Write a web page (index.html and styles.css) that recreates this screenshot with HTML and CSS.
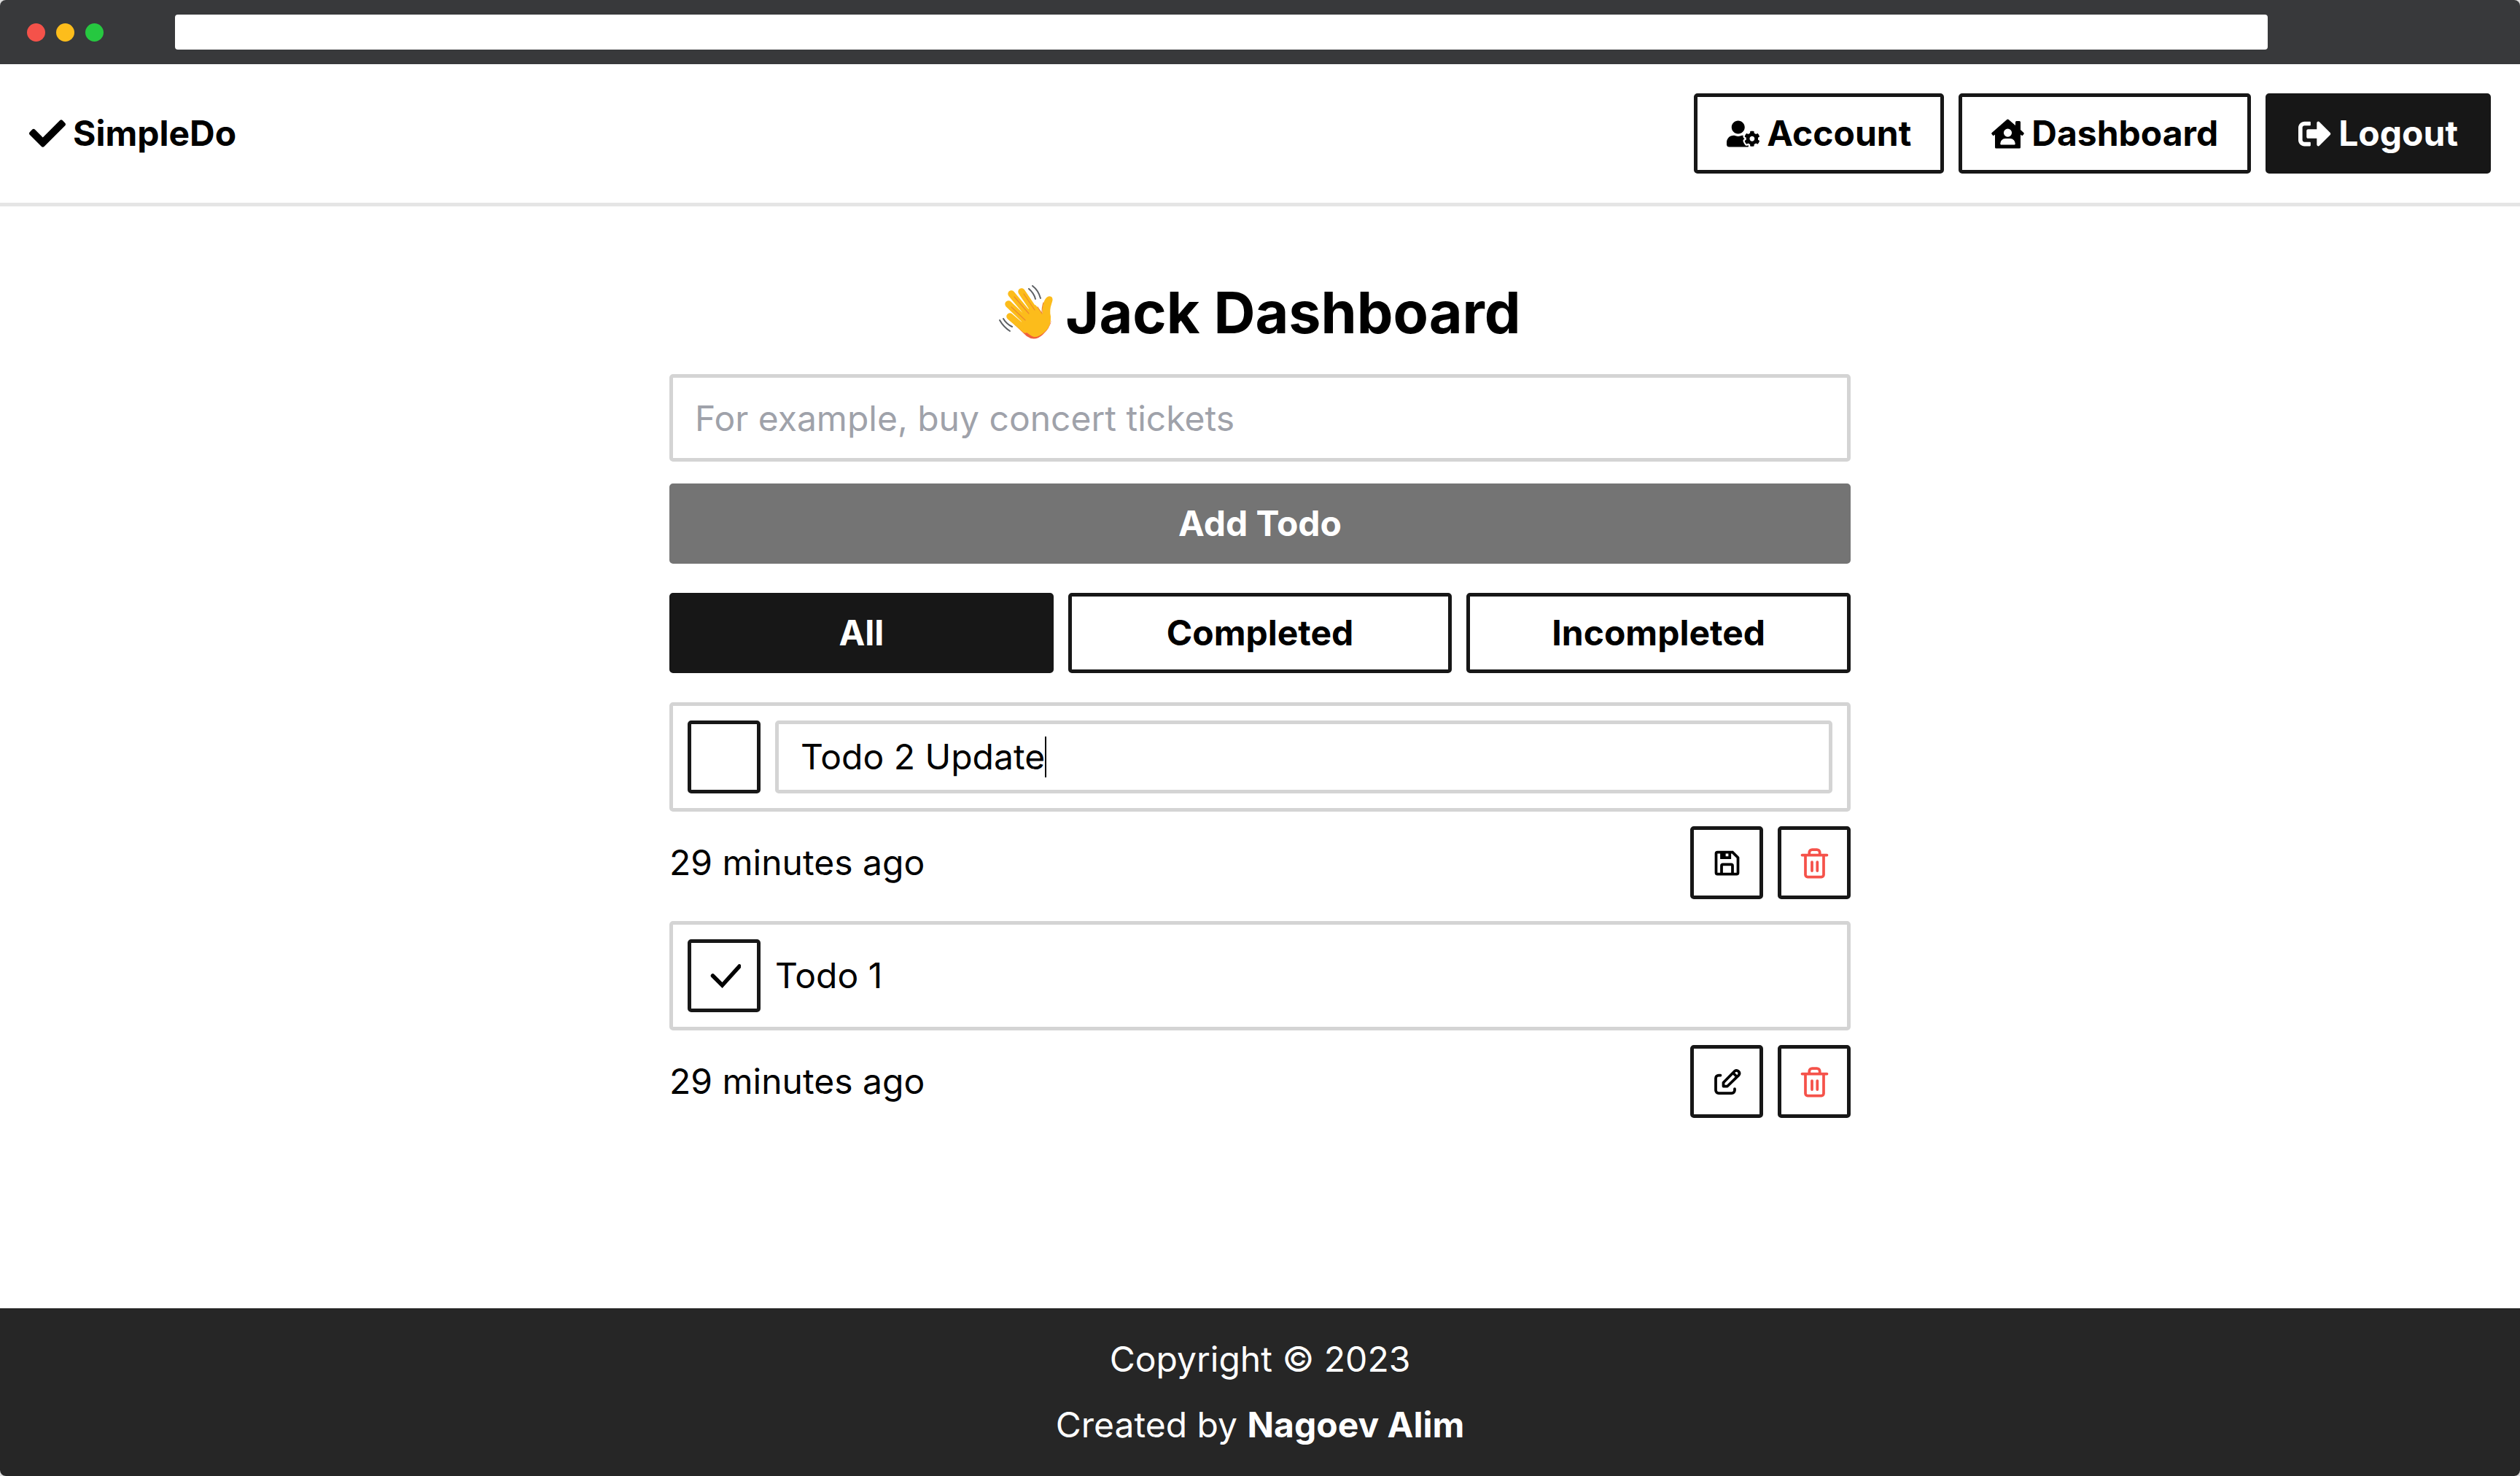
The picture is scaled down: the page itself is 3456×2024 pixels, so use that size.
FILE: index.html
```html
<!DOCTYPE html>
<html lang="en">
<head>
<meta charset="utf-8">
<meta name="viewport" content="width=device-width, initial-scale=1">
<title>SimpleDo</title>
<link rel="stylesheet" href="styles.css">
</head>
<body>
<div class="chrome">
  <div class="dots"><span class="dot dot-red"></span><span class="dot dot-yellow"></span><span class="dot dot-green"></span></div>
  <input class="address" type="text" aria-label="Address">
</div>

<header class="header">
  <a class="logo" href="#">
    <svg class="icon-logo" viewBox="0 0 512 512" fill="currentColor" aria-hidden="true"><path d="M173.898 439.404l-166.4-166.4c-9.997-9.997-9.997-26.206 0-36.204l36.203-36.204c9.997-9.998 26.207-9.998 36.204 0L192 312.69 432.095 72.596c9.997-9.997 26.207-9.997 36.204 0l36.203 36.204c9.997 9.997 9.997 26.206 0 36.204l-294.4 294.401c-9.998 9.997-26.207 9.997-36.204-.001z"/></svg>
    SimpleDo
  </a>
  <nav class="nav">
    <a class="btn" href="#">
      <svg class="icon" viewBox="0 0 640 512" fill="currentColor" aria-hidden="true"><path d="M610.5 373.3c2.6-14.1 2.6-28.5 0-42.6l25.8-14.9c3-1.7 4.3-5.2 3.3-8.5-6.7-21.6-18.2-41.2-33.2-57.4-2.3-2.5-6-3.1-9-1.4l-25.8 14.9c-10.9-9.3-23.4-16.5-36.9-21.3v-29.8c0-3.4-2.4-6.4-5.7-7.1-22.3-5-45-4.8-66.2 0-3.3.7-5.7 3.7-5.7 7.1v29.8c-13.5 4.8-26 12-36.9 21.3l-25.8-14.9c-2.9-1.7-6.7-1.1-9 1.4-15 16.2-26.5 35.8-33.2 57.4-1 3.3.4 6.8 3.3 8.5l25.8 14.9c-2.6 14.1-2.6 28.5 0 42.6l-25.8 14.9c-3 1.7-4.3 5.2-3.3 8.5 6.7 21.6 18.2 41.1 33.2 57.4 2.3 2.5 6 3.1 9 1.4l25.8-14.9c10.9 9.3 23.4 16.5 36.9 21.3v29.8c0 3.4 2.4 6.4 5.7 7.1 22.3 5 45 4.8 66.2 0 3.3-.7 5.7-3.7 5.7-7.1v-29.8c13.5-4.8 26-12 36.9-21.3l25.8 14.9c2.9 1.7 6.7 1.1 9-1.4 15-16.2 26.5-35.8 33.2-57.4 1-3.3-.4-6.8-3.3-8.5l-25.8-14.9zM496 400.5c-26.8 0-48.5-21.8-48.5-48.5s21.8-48.5 48.5-48.5 48.5 21.8 48.5 48.5-21.7 48.5-48.5 48.5zM224 256c70.7 0 128-57.3 128-128S294.7 0 224 0 96 57.3 96 128s57.3 128 128 128zm201.2 226.5c-2.3-1.2-4.6-2.6-6.8-3.9l-7.9 4.6c-6 3.4-12.8 5.3-19.6 5.3-10.9 0-21.4-4.6-28.9-12.6-18.3-19.8-32.3-43.9-40.2-69.6-5.5-17.7 1.9-36.4 17.9-45.7l7.9-4.6c-.1-2.6-.1-5.2 0-7.8l-7.9-4.6c-16-9.2-23.4-28-17.9-45.7.9-2.9 2.2-5.8 3.2-8.7-3.8-.3-7.5-1.2-11.4-1.2h-16.7c-22.2 10.2-46.9 16-72.9 16s-50.6-5.8-72.9-16h-16.7C60.2 288 0 348.2 0 422.4V464c0 26.5 21.5 48 48 48h352c10.1 0 19.5-3.2 27.2-8.5-1.2-3.8-2-7.7-2-11.8v-9.2z"/></svg>
      Account
    </a>
    <a class="btn" href="#">
      <svg class="icon" viewBox="0 0 45 45" fill="currentColor" fill-rule="evenodd" aria-hidden="true"><path d="M21 3.2a2.2 2.2 0 0 1 3 0L33 11V6.500a1.500 1.500 0 0 1 1.500-1.500h4a1.500 1.500 0 0 1 1.500 1.500V17l4.300 3.900a1.500 1.500 0 0 1 .1 2l-1.300 1.500a1.500 1.500 0 0 1-2 .1L40 23.500V41a1.500 1.500 0 0 1-1.500 1.500H6.500A1.500 1.500 0 0 1 5 41V23.500l-1.100 1a1.500 1.500 0 0 1-2-.1L.600 22.900a1.500 1.500 0 0 1 .1-2zM22.500 15.500a5.600 5.600 0 1 0 0 11.200 5.600 5.600 0 1 0 0-11.200zM19 29a6.800 6.800 0 0 0-6.700 7.200c0 .800.600 1.300 1.300 1.300h17.800c.700 0 1.300-.5 1.300-1.300A6.800 6.800 0 0 0 26 29z"/></svg>
      Dashboard
    </a>
    <button class="btn btn-dark" type="button">
      <svg class="icon" viewBox="0 0 512 512" fill="currentColor" aria-hidden="true"><path d="M497 273L329 441c-15 15-41 4.500-41-17v-96H152c-13.300 0-24-10.700-24-24v-96c0-13.300 10.700-24 24-24h136V88c0-21.400 25.900-32 41-17l168 168c9.300 9.400 9.300 24.600 0 34zM192 436v-40c0-6.600-5.400-12-12-12H96c-17.700 0-32-14.300-32-32V160c0-17.700 14.300-32 32-32h84c6.600 0 12-5.400 12-12V76c0-6.600-5.400-12-12-12H96c-53 0-96 43-96 96v192c0 53 43 96 96 96h84c6.600 0 12-5.400 12-12z"/></svg>
      Logout
    </button>
  </nav>
</header>

<main class="main">
  <h1 class="title">
    <svg class="wave" viewBox="0 0 75 75" fill="none" stroke-linecap="round" stroke-linejoin="round" aria-hidden="true">
      <path d="M20 53 38 70Q49 78 60 68 70 59 72 48L68 57Q61 68 50 69 42 69 34 61z" fill="#f0603c"/>
      <path d="M17 12 42 42M31 9 52 40M13 26 38 50M15 43 36 61" stroke="#fcbc1b" stroke-width="9.500"/>
      <path d="M28 40 50 27 60 39Q59 29 62 22 66 13 72 16 75 18 72 26 69 34 71 43 72 56 63 64 54 72 48 71 43 70 34 61z" fill="#fcbc1b"/>
      <path d="M21 16 41 39M34 12 49 34M17 30 36 48M53 30 59 39Q59 30 61 24" stroke="#ee8a2e" stroke-width="1.200"/>
      <path d="M46 1q8 6 11 17M41 5q7 6 9 14M1 48q5 9 14 15M6 46q4 7 12 11" stroke="#5c5f63" stroke-width="2"/>
    </svg>
    Jack Dashboard
  </h1>

  <form class="add-form">
    <input class="field" type="text" placeholder="For example, buy concert tickets" aria-label="New todo">
    <button class="btn btn-dark btn-muted" type="button">Add Todo</button>
  </form>

  <div class="filters">
    <button class="btn btn-dark" type="button">All</button>
    <button class="btn" type="button">Completed</button>
    <button class="btn" type="button">Incompleted</button>
  </div>

  <ul class="todos">
    <li class="todo">
      <div class="card">
        <span class="check"><input class="box" type="checkbox" aria-label="Todo 2 Update"></span>
        <div class="edit">
          <input class="edit-input" type="text" value="Todo 2 Update" size="12" aria-label="Edit todo">
          <span class="caret"></span>
        </div>
      </div>
      <div class="meta">
        <time>29 minutes ago</time>
        <div class="actions">
          <button class="square" type="button" aria-label="Save">
            <svg class="icon" viewBox="0 0 24 24" fill="currentColor" aria-hidden="true"><path d="M5 21h14a2 2 0 0 0 2-2V8a1 1 0 0 0-.29-.71l-4-4A1 1 0 0 0 16 3H5a2 2 0 0 0-2 2v14a2 2 0 0 0 2 2zm10-2H9v-5h6zM13 7h-2V5h2zM5 5h2v4h8V5h.59L19 8.410V19h-2v-5a2 2 0 0 0-2-2H9a2 2 0 0 0-2 2v5H5z"/></svg>
          </button>
          <button class="square square-delete" type="button" aria-label="Delete">
            <svg class="icon" viewBox="0 0 45 45" fill="none" stroke="currentColor" stroke-width="3.750" stroke-linecap="round" stroke-linejoin="round" aria-hidden="true"><path d="M5.500 11.500h34M15.300 11V8a4 4 0 0 1 4-4h6.400a4 4 0 0 1 4 4v3M10 12v26.500a3 3 0 0 0 3 3h19a3 3 0 0 0 3-3V12M19 21v12M26.300 21v12"/></svg>
          </button>
        </div>
      </div>
    </li>
    <li class="todo">
      <div class="card">
        <span class="check">
          <input class="box" type="checkbox" id="todo-1" checked>
          <svg class="tick" viewBox="0 0 45 45" fill="none" stroke="#000" stroke-width="5.500" stroke-linecap="round" aria-hidden="true"><path d="M6.500 22 19.500 35 43 9"/></svg>
        </span>
        <label for="todo-1">Todo 1</label>
      </div>
      <div class="meta">
        <time>29 minutes ago</time>
        <div class="actions">
          <button class="square" type="button" aria-label="Edit">
            <svg class="icon" viewBox="0 0 45 45" fill="none" stroke="currentColor" stroke-width="3.750" stroke-linecap="round" stroke-linejoin="round" aria-hidden="true"><path d="M13.500 13.500H11a4 4 0 0 0-4 4V34a4 4 0 0 0 4 4h18a4 4 0 0 0 4-4v-2"/><path d="M17.500 28.500V23.500L33 7.800a4 4 0 0 1 5.600 5.600L23 28.500zM31 10.500l4.500 4.500"/></svg>
          </button>
          <button class="square square-delete" type="button" aria-label="Delete">
            <svg class="icon" viewBox="0 0 45 45" fill="none" stroke="currentColor" stroke-width="3.750" stroke-linecap="round" stroke-linejoin="round" aria-hidden="true"><path d="M5.500 11.500h34M15.300 11V8a4 4 0 0 1 4-4h6.400a4 4 0 0 1 4 4v3M10 12v26.500a3 3 0 0 0 3 3h19a3 3 0 0 0 3-3V12M19 21v12M26.300 21v12"/></svg>
          </button>
        </div>
      </div>
    </li>
  </ul>
</main>

<footer class="footer">
  <p>Copyright © 2023</p>
  <p>Created by <a class="author" href="#">Nagoev Alim</a></p>
</footer>
</body>
</html>
```

FILE: styles.css
```css
* { box-sizing: border-box; margin: 0; padding: 0; }

html { background: #dedede; }

body {
  display: flex;
  flex-direction: column;
  min-height: 100vh;
  overflow: hidden;
  border-radius: 8px;
  background: #fff;
  color: #000;
  font: 400 48px/70px Inter, "Liberation Sans", sans-serif;
}

a { color: inherit; text-decoration: none; }
button, input { font: inherit; color: inherit; }
button { cursor: pointer; }
svg { display: block; flex: none; }

.chrome {
  display: flex;
  align-items: center;
  height: 88px;
  padding: 0 10% 0 37px;
  background: #38393b;
}
.dots { display: flex; flex: none; gap: 15px; width: 203px; }
.dot { width: 25px; height: 25px; border-radius: 50%; }
.dot-red { background: #f4524a; }
.dot-yellow { background: #fdbd1b; }
.dot-green { background: #26c840; }
.address { flex: 1; min-width: 0; height: 48px; padding: 0 12px; border: 0; border-radius: 4px; background: #fff; font-size: 28px; }

.header {
  display: flex;
  align-items: center;
  justify-content: space-between;
  padding: 40px;
  border-bottom: 5px solid #e5e5e5;
}
.logo { display: flex; align-items: center; gap: 10px; font-weight: 700; }
.icon-logo { width: 50px; height: 50px; }
.icon { width: 45px; height: 45px; }
.nav { display: flex; gap: 20px; }

.btn {
  display: flex;
  align-items: center;
  justify-content: center;
  gap: 10px;
  height: 110px;
  padding: 0 40px;
  border: 5px solid #171717;
  border-radius: 5px;
  background: #fff;
  font-weight: 700;
}
.btn-dark { background: #171717; color: #fff; }
.btn-muted { border-color: #747474; background: #747474; }

.main {
  flex: 1;
  width: 100%;
  max-width: 1700px;
  margin: 0 auto;
  padding: 100px 40px;
}
.title {
  display: flex;
  align-items: center;
  justify-content: center;
  gap: 16px;
  margin-bottom: 40px;
  font-size: 79px;
  line-height: 90px;
}
.wave { width: 75px; height: 75px; }

.add-form { display: grid; gap: 30px; margin-bottom: 40px; }
.field {
  width: 100%;
  height: 120px;
  padding: 20px 30px;
  border: 5px solid #d4d4d4;
  border-radius: 5px;
  background: #fff;
}
.field::placeholder { color: #9fa2aa; opacity: 1; }

.filters { display: grid; grid-template-columns: repeat(3, 1fr); gap: 20px; margin-bottom: 40px; }

.todos { display: grid; gap: 30px; list-style: none; }
.todo { display: grid; gap: 20px; }
.card {
  display: flex;
  align-items: center;
  gap: 20px;
  padding: 20px;
  border: 5px solid #d4d4d4;
  border-radius: 5px;
}
.check { position: relative; flex: none; width: 100px; height: 100px; }
.box {
  display: block;
  width: 100%;
  height: 100%;
  appearance: none;
  border: 5px solid #171717;
  border-radius: 5px;
  background: #fff;
}
.tick { position: absolute; inset: 0; width: 45px; height: 45px; margin: auto; pointer-events: none; }
.edit {
  display: flex;
  flex: 1;
  align-items: center;
  height: 100px;
  padding: 0 30px;
  border: 5px solid #d4d4d4;
  border-radius: 5px;
}
.edit-input { field-sizing: content; height: 70px; border: 0; outline: 0; background: none; }
.caret { width: 2px; height: 56px; background: #000; }

.meta { display: flex; align-items: center; justify-content: space-between; }
.actions { display: flex; gap: 20px; }
.square {
  display: grid;
  place-items: center;
  width: 100px;
  height: 100px;
  border: 5px solid #171717;
  border-radius: 5px;
  background: #fff;
}
.square-delete { color: #f5524a; }

.footer {
  display: grid;
  gap: 20px;
  padding: 35px 40px;
  background: #262626;
  color: #fff;
  text-align: center;
}
.author { font-weight: 700; }
```
